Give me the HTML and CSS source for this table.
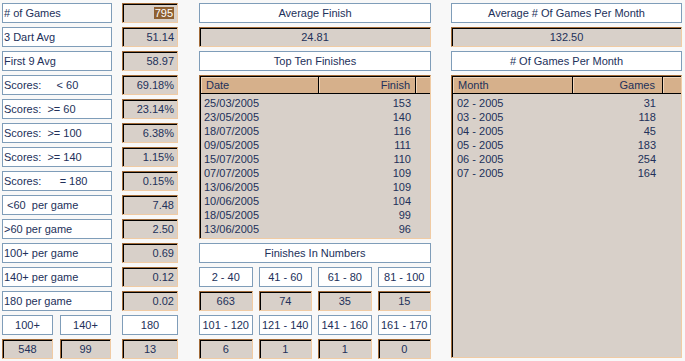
FILE: index.html
```html
<!DOCTYPE html>
<html>
  <head>
    <meta charset="utf-8">
    <title>Darts Statistics</title>
    <link rel="stylesheet" href="styles.css">
  </head>
  <body>
    <div class="page">

      <!-- player totals -->
      <div class="left">
        <div class="row"><div class="lbl"># of Games</div><div class="val"><span class="sel">795</span></div></div>
        <div class="row"><div class="lbl">3 Dart Avg</div><div class="val">51.14</div></div>
        <div class="row"><div class="lbl">First 9 Avg</div><div class="val">58.97</div></div>
        <div class="row"><div class="lbl">Scores:     &lt; 60</div><div class="val">69.18%</div></div>
        <div class="row"><div class="lbl">Scores:  &gt;= 60</div><div class="val">23.14%</div></div>
        <div class="row"><div class="lbl">Scores:  &gt;= 100</div><div class="val">6.38%</div></div>
        <div class="row"><div class="lbl">Scores:  &gt;= 140</div><div class="val">1.15%</div></div>
        <div class="row"><div class="lbl">Scores:      = 180</div><div class="val">0.15%</div></div>
        <div class="row"><div class="lbl"> &lt;60  per game</div><div class="val">7.48</div></div>
        <div class="row"><div class="lbl">&gt;60 per game</div><div class="val">2.50</div></div>
        <div class="row"><div class="lbl">100+ per game</div><div class="val">0.69</div></div>
        <div class="row"><div class="lbl">140+ per game</div><div class="val">0.12</div></div>
        <div class="row"><div class="lbl">180 per game</div><div class="val">0.02</div></div>
        <div class="row">
          <div class="pair"><div class="lbl c">100+</div><div class="lbl c">140+</div></div>
          <div class="lbl c w56">180</div>
        </div>
        <div class="row">
          <div class="pair"><div class="val c">548</div><div class="val c">99</div></div>
          <div class="val c">13</div>
        </div>
      </div>

      <!-- finishes -->
      <div class="col">
        <div class="lbl c">Average Finish</div>
        <div class="val c">24.81</div>
        <div class="lbl c">Top Ten Finishes</div>
        <div class="tbl fin">
          <div class="thead">
            <div class="th k">Date</div>
            <div class="th n">Finish</div>
            <div class="th blank"></div>
          </div>
          <div class="tbody">
            <div class="tr"><div class="td k">25/03/2005</div><div class="td n">153</div></div>
            <div class="tr"><div class="td k">23/05/2005</div><div class="td n">140</div></div>
            <div class="tr"><div class="td k">18/07/2005</div><div class="td n">116</div></div>
            <div class="tr"><div class="td k">09/05/2005</div><div class="td n">111</div></div>
            <div class="tr"><div class="td k">15/07/2005</div><div class="td n">110</div></div>
            <div class="tr"><div class="td k">07/07/2005</div><div class="td n">109</div></div>
            <div class="tr"><div class="td k">13/06/2005</div><div class="td n">109</div></div>
            <div class="tr"><div class="td k">10/06/2005</div><div class="td n">104</div></div>
            <div class="tr"><div class="td k">18/05/2005</div><div class="td n">99</div></div>
            <div class="tr"><div class="td k">13/06/2005</div><div class="td n">96</div></div>
          </div>
        </div>
        <div class="lbl c">Finishes In Numbers</div>
        <div class="ranges">
          <div class="lbl c">2 - 40</div>
          <div class="lbl c">41 - 60</div>
          <div class="lbl c">61 - 80</div>
          <div class="lbl c">81 - 100</div>
          <div class="val c">663</div>
          <div class="val c">74</div>
          <div class="val c">35</div>
          <div class="val c">15</div>
          <div class="lbl c">101 - 120</div>
          <div class="lbl c">121 - 140</div>
          <div class="lbl c">141 - 160</div>
          <div class="lbl c">161 - 170</div>
          <div class="val c">6</div>
          <div class="val c">1</div>
          <div class="val c">1</div>
          <div class="val c">0</div>
        </div>
      </div>

      <!-- games per month -->
      <div class="col right">
        <div class="lbl c">Average # Of Games Per Month</div>
        <div class="val c">132.50</div>
        <div class="lbl c"># Of Games Per Month</div>
        <div class="tbl month">
          <div class="thead">
            <div class="th k">Month</div>
            <div class="th n">Games</div>
            <div class="th blank"></div>
          </div>
          <div class="tbody">
            <div class="tr"><div class="td k">02 - 2005</div><div class="td n">31</div></div>
            <div class="tr"><div class="td k">03 - 2005</div><div class="td n">118</div></div>
            <div class="tr"><div class="td k">04 - 2005</div><div class="td n">45</div></div>
            <div class="tr"><div class="td k">05 - 2005</div><div class="td n">183</div></div>
            <div class="tr"><div class="td k">06 - 2005</div><div class="td n">254</div></div>
            <div class="tr"><div class="td k">07 - 2005</div><div class="td n">164</div></div>
          </div>
        </div>
      </div>

    </div>
  </body>
</html>
```

FILE: styles.css
```css
html {
  font-family: 'Liberation Sans', Arial, sans-serif;
  font-size: 11px;
  color: #22305a;
}
body {
  margin: 0;
  padding: 3px 0 0 2px;
  background: #f8f8f8;
}
.page {
  display: flex;
  align-items: flex-start;
}

/* boxes */
.lbl {
  box-sizing: border-box;
  height: 20px;
  border: 1px solid #7f9db9;
  background: #fff;
  line-height: 18px;
  padding-left: 1px;
  white-space: pre;
  overflow: hidden;
}
.val {
  box-sizing: border-box;
  height: 20px;
  border: 1px solid;
  border-color: #a26c3a #f0cba4 #f0cba4 #a26c3a;
  box-shadow: inset 1px 1px 0 #000;
  background: #d8d0c9;
  line-height: 18px;
  text-align: right;
  padding-right: 3px;
}
.c {
  text-align: center;
  padding: 0;
}
.sel {
  background: #8e6032;
  color: #fff;
  padding: 0 1px;
}

/* left column */
.left {
  width: 176px;
  display: flex;
  flex-direction: column;
  gap: 4px;
}
.row {
  display: flex;
  gap: 10px;
}
.row .lbl {
  width: 110px;
}
.row .val {
  width: 56px;
}
.pair {
  width: 109px;
  margin-right: 1px;
  display: flex;
  gap: 7px;
}
.pair .lbl, .pair .val {
  flex: 1;
  width: auto;
}
.row .w56 {
  width: 56px;
}

/* middle and right columns */
.col {
  width: 232px;
  margin-left: 21px;
  display: flex;
  flex-direction: column;
  gap: 4px;
}
.col.right {
  width: 231px;
  margin-left: 20px;
}
.ranges {
  display: grid;
  grid-template-columns: repeat(4, 1fr);
  gap: 4px 6px;
}

/* list tables */
.tbl {
  box-sizing: border-box;
  border: 1px solid;
  border-color: #a26c3a #f0cba4 #f0cba4 #a26c3a;
  box-shadow: inset 1px 1px 0 #000;
  background: #d8d0c9;
  padding: 1px 0 0 1px;
}
.fin { height: 164px; }
.month { height: 283px; }
.thead {
  display: flex;
  height: 17px;
}
.th {
  box-sizing: border-box;
  background: #d6b08b;
  border-right: 1px solid #000;
  border-bottom: 1px solid #000;
  box-shadow: inset 1px 1px 0 #f0d6bc;
  line-height: 16px;
}
.th.blank {
  flex: 1;
  border-right: none;
}
.tbody {
  padding-top: 2px;
}
.tr {
  display: flex;
  height: 14px;
  line-height: 14px;
}
.fin .k { width: 118px; padding-left: 3px; }
.fin .n { width: 97px; padding-right: 5px; text-align: right; }
.fin .th.k { padding-left: 5px; }
.month .k { width: 120px; padding-left: 4px; }
.month .n { width: 90px; padding-right: 7px; text-align: right; }
.month .th.k { padding-left: 5px; }
.td, .th {
  box-sizing: border-box;
}
```
